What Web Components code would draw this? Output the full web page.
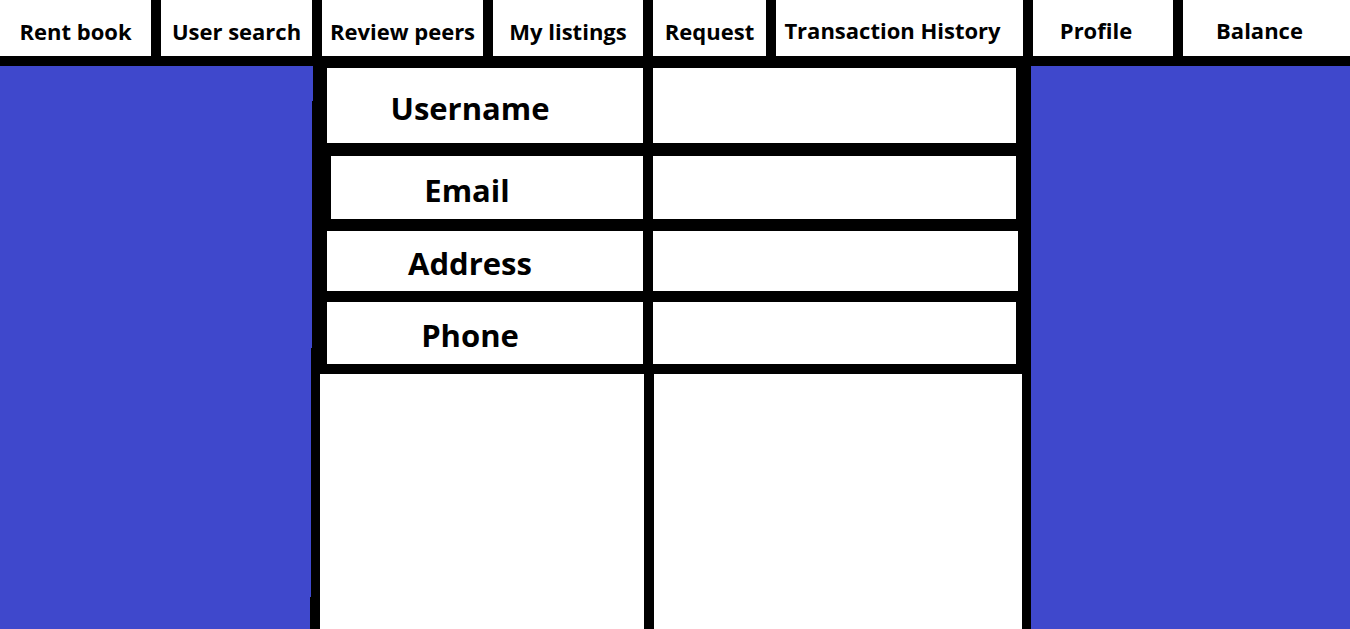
<!DOCTYPE html>
<html lang="en">
<head>
<meta charset="utf-8">
<title>Profile</title>
<style>
html, body { margin: 0; background: #000; }
body { font-family: "Open Sans", "Noto Sans", sans-serif; color: #000; }
</style>
</head>
<body>
<profile-page></profile-page>
<script>
class NavTab extends HTMLElement {
  connectedCallback() {
    this.attachShadow({ mode: "open" }).innerHTML = `
      <style>
        :host { display: flex; min-width: 0; background: #fff; }
        a { flex: 1; display: flex; align-items: center; justify-content: center;
            padding-top: 6px; color: inherit; text-decoration: none; white-space: nowrap;
            font-size: 22px; line-height: 28px; font-weight: 700; }
        :host([lean]) a { padding: 4px 14px 0 0; }
      </style>
      <a href="#"><slot></slot></a>`;
  }
}
customElements.define("nav-tab", NavTab);

class NavBar extends HTMLElement {
  connectedCallback() {
    this.attachShadow({ mode: "open" }).innerHTML = `
      <style>
        :host { display: block; }
        nav { display: grid; gap: 10px; min-height: 56px;
              grid-template-columns: 151fr 151fr 161fr 150fr 113fr 247fr 140fr 167fr; }
      </style>
      <nav><slot></slot></nav>`;
  }
}
customElements.define("nav-bar", NavBar);

class ProfileField extends HTMLElement {
  connectedCallback() {
    const label = this.getAttribute("label");
    this.attachShadow({ mode: "open" }).innerHTML = `
      <style>
        :host { display: grid; grid-template-columns: 330fr 10px 378fr; }
        label { display: flex; align-items: center; justify-content: center;
                margin-left: 14px; padding: 4px 30px 0 0; background: #fff;
                font-size: 31px; line-height: 40px; font-weight: 700; }
        :host([inset]) label { margin-left: 18px; padding-right: 40px; }
        input { grid-column: 3; min-width: 0; margin: 0 15px 0 0; padding: 0 16px; border: 0;
                border-radius: 0; outline: 0; background: #fff; color: inherit;
                font: 24px "Open Sans", sans-serif; }
        :host([wide]) input { margin-right: 13px; }
      </style>
      <label for="value">${label}</label>
      <input id="value" type="text">`;
  }
}
customElements.define("profile-field", ProfileField);

class ProfilePage extends HTMLElement {
  connectedCallback() {
    this.attachShadow({ mode: "open" }).innerHTML = `
      <style>
        :host { display: flex; flex-direction: column; min-height: 100vh; background: #000; }
        .body { flex: 1; display: grid; grid-template-columns: 313fr 718fr 319fr; }
        aside { margin-top: 10px; background: #3f48cc; }
        .left { clip-path: polygon(0 0, 100% 0, 100% 35px, calc(100% - 1px) 35px,
                calc(100% - 1px) 282px, calc(100% - 2px) 282px, calc(100% - 2px) 531px,
                calc(100% - 3px) 531px, calc(100% - 3px) 100%, 0 100%); }
        main { display: grid; margin-top: 12px;
               grid-template-rows: 88px 75px 71px 72px 1fr; }
        profile-field:nth-child(1) { margin-bottom: 13px; }
        profile-field:nth-child(2) { margin-bottom: 12px; }
        profile-field:nth-child(3) { margin-bottom: 11px; }
        profile-field:nth-child(4) { margin-bottom: 10px; }
        .rest { display: grid; grid-template-columns: 331fr 10px 377fr; }
        .rest div { background: #fff; }
        .rest div:first-child { margin-left: 7px; }
        .rest div:last-child { grid-column: 3; margin-right: 9px; }
      </style>
      <nav-bar>
        <nav-tab>Rent book</nav-tab>
        <nav-tab>User search</nav-tab>
        <nav-tab>Review peers</nav-tab>
        <nav-tab>My listings</nav-tab>
        <nav-tab>Request</nav-tab>
        <nav-tab lean>Transaction History</nav-tab>
        <nav-tab lean>Profile</nav-tab>
        <nav-tab lean>Balance</nav-tab>
      </nav-bar>
      <div class="body">
        <aside class="left"></aside>
        <main>
          <profile-field label="Username"></profile-field>
          <profile-field label="Email" inset></profile-field>
          <profile-field label="Address" wide></profile-field>
          <profile-field label="Phone"></profile-field>
          <div class="rest"><div></div><div></div></div>
        </main>
        <aside></aside>
      </div>`;
  }
}
customElements.define("profile-page", ProfilePage);
</script>
</body>
</html>
